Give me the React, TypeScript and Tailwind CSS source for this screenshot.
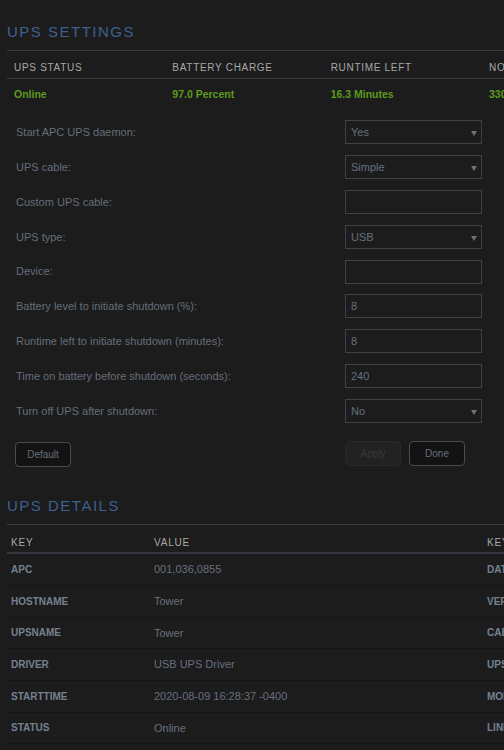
import React from "react"

// 설정 폼 항목
type Field = { label: string; value: string; select?: boolean }

const fields: Field[] = [
  { label: "Start APC UPS daemon:", value: "Yes", select: true },
  { label: "UPS cable:", value: "Simple", select: true },
  { label: "Custom UPS cable:", value: "" },
  { label: "UPS type:", value: "USB", select: true },
  { label: "Device:", value: "" },
  { label: "Battery level to initiate shutdown (%):", value: "8" },
  { label: "Runtime left to initiate shutdown (minutes):", value: "8" },
  { label: "Time on battery before shutdown (seconds):", value: "240" },
  { label: "Turn off UPS after shutdown:", value: "No", select: true },
]

const status = [
  { head: "UPS STATUS", value: "Online" },
  { head: "BATTERY CHARGE", value: "97.0 Percent" },
  { head: "RUNTIME LEFT", value: "16.3 Minutes" },
  { head: "NOMINAL POWER", value: "330 Watts" },
  { head: "UPS LOAD", value: "12.0 Percent" },
  { head: "OUTPUT VOLTAGE", value: "120.0 Volts" },
]

const details: [string, string, string, string][] = [
  ["APC", "001,036,0855", "DATE", "2020-08-12 09:14:02 -0400"],
  ["HOSTNAME", "Tower", "VERSION", "3.14.14 (31 May 2016) slackware"],
  ["UPSNAME", "Tower", "CABLE", "USB Cable"],
  ["DRIVER", "USB UPS Driver", "UPSMODE", "Stand Alone"],
  ["STARTTIME", "2020-08-09 16:28:37 -0400", "MODEL", "Back-UPS NS 1500M2"],
  ["STATUS", "Online", "LINEV", "120.0 Volts"],
]

function SectionTitle({ children }: { children: React.ReactNode }) {
  return (
    <div className="border-b border-[#373d46] pt-[20px] pb-[6px] text-[15px] leading-[24px] tracking-[1.5px] text-[#3d6190]">
      {children}
    </div>
  )
}

function Arrow() {
  return (
    <svg width="6" height="5" viewBox="0 0 6 5" className="absolute right-[4px] top-[10px]">
      <path d="M0 0H6L3 5Z" fill="#6a7380" />
    </svg>
  )
}

export default function App() {
  return (
    <div className="min-h-screen w-full overflow-hidden bg-[#1c1c1c] font-['Liberation_Sans',Arial,sans-serif]">
      <div className="w-[974px] px-[7px]">
        {/* UPS 설정 */}
        <SectionTitle>UPS SETTINGS</SectionTitle>

        <div className="grid w-[950px] grid-cols-6 border-b border-[#373d46] pt-[10px] pb-[4px] text-[10px] leading-[13px] tracking-[0.7px] text-[#a8a8a8]">
          {status.map((s) => (
            <div key={s.head} className="pl-[7px]">
              {s.head}
            </div>
          ))}
        </div>
        <div className="grid h-[31px] w-[950px] grid-cols-6 items-center text-[10.5px] font-bold text-[#5d9b1c]">
          {status.map((s) => (
            <div key={s.head} className="pl-[7px]">
              {s.value}
            </div>
          ))}
        </div>

        <div className="pt-[5px]">
          {fields.map((f) => (
            <div key={f.label} className="flex h-[34.8px] items-center">
              <div className="w-[338px] shrink-0 pl-[9px] text-[11px] text-[#656e7a]">{f.label}</div>
              <div className="relative flex h-[24px] w-[137px] shrink-0 items-center border border-[#3c424a] pl-[5px] text-[11px] text-[#66707c]">
                {f.value}
                {f.select && <Arrow />}
              </div>
            </div>
          ))}
        </div>

        <div className="mt-[13px] flex">
          <div className="w-[338px] shrink-0 pl-[8px]">
            <button className="h-[25px] w-[56px] rounded-[4px] border border-[#464c54] bg-[#131313] text-[10px] text-[#66707c]">
              Default
            </button>
          </div>
          <div className="flex gap-[8px]">
            <button disabled className="h-[25px] w-[56px] rounded-[4px] border border-[#282828] bg-[#222222] text-[10px] text-[#3a3a3a]">
              Apply
            </button>
            <button className="h-[25px] w-[56px] rounded-[4px] border border-[#464c54] bg-[#131313] text-[10px] text-[#66707c]">
              Done
            </button>
          </div>
        </div>

        {/* UPS 상세 */}
        <div className="mt-[7px]">
          <SectionTitle>UPS DETAILS</SectionTitle>
        </div>

        <div className="flex border-b-2 border-[#31363d] pt-[11px] pb-[3px] text-[10px] leading-[13px] tracking-[0.8px] text-[#a8a8a8]">
          <div className="w-[143px] shrink-0 pl-[4px]">KEY</div>
          <div className="w-[333px] shrink-0 pl-[4px]">VALUE</div>
          <div className="w-[143px] shrink-0 pl-[4px]">KEY</div>
          <div className="w-[333px] shrink-0 pl-[4px]">VALUE</div>
        </div>
        {details.map(([k1, v1, k2, v2]) => (
          <div key={k1} className="flex h-[31.7px] items-center border-b border-[#161616]">
            <div className="w-[143px] shrink-0 pl-[4px] text-[10px] font-bold text-[#76818f]">{k1}</div>
            <div className="w-[333px] shrink-0 pl-[4px] text-[11px] text-[#66707c]">{v1}</div>
            <div className="w-[143px] shrink-0 pl-[4px] text-[10px] font-bold text-[#76818f]">{k2}</div>
            <div className="w-[333px] shrink-0 pl-[4px] text-[11px] text-[#66707c]">{v2}</div>
          </div>
        ))}
      </div>
    </div>
  )
}
